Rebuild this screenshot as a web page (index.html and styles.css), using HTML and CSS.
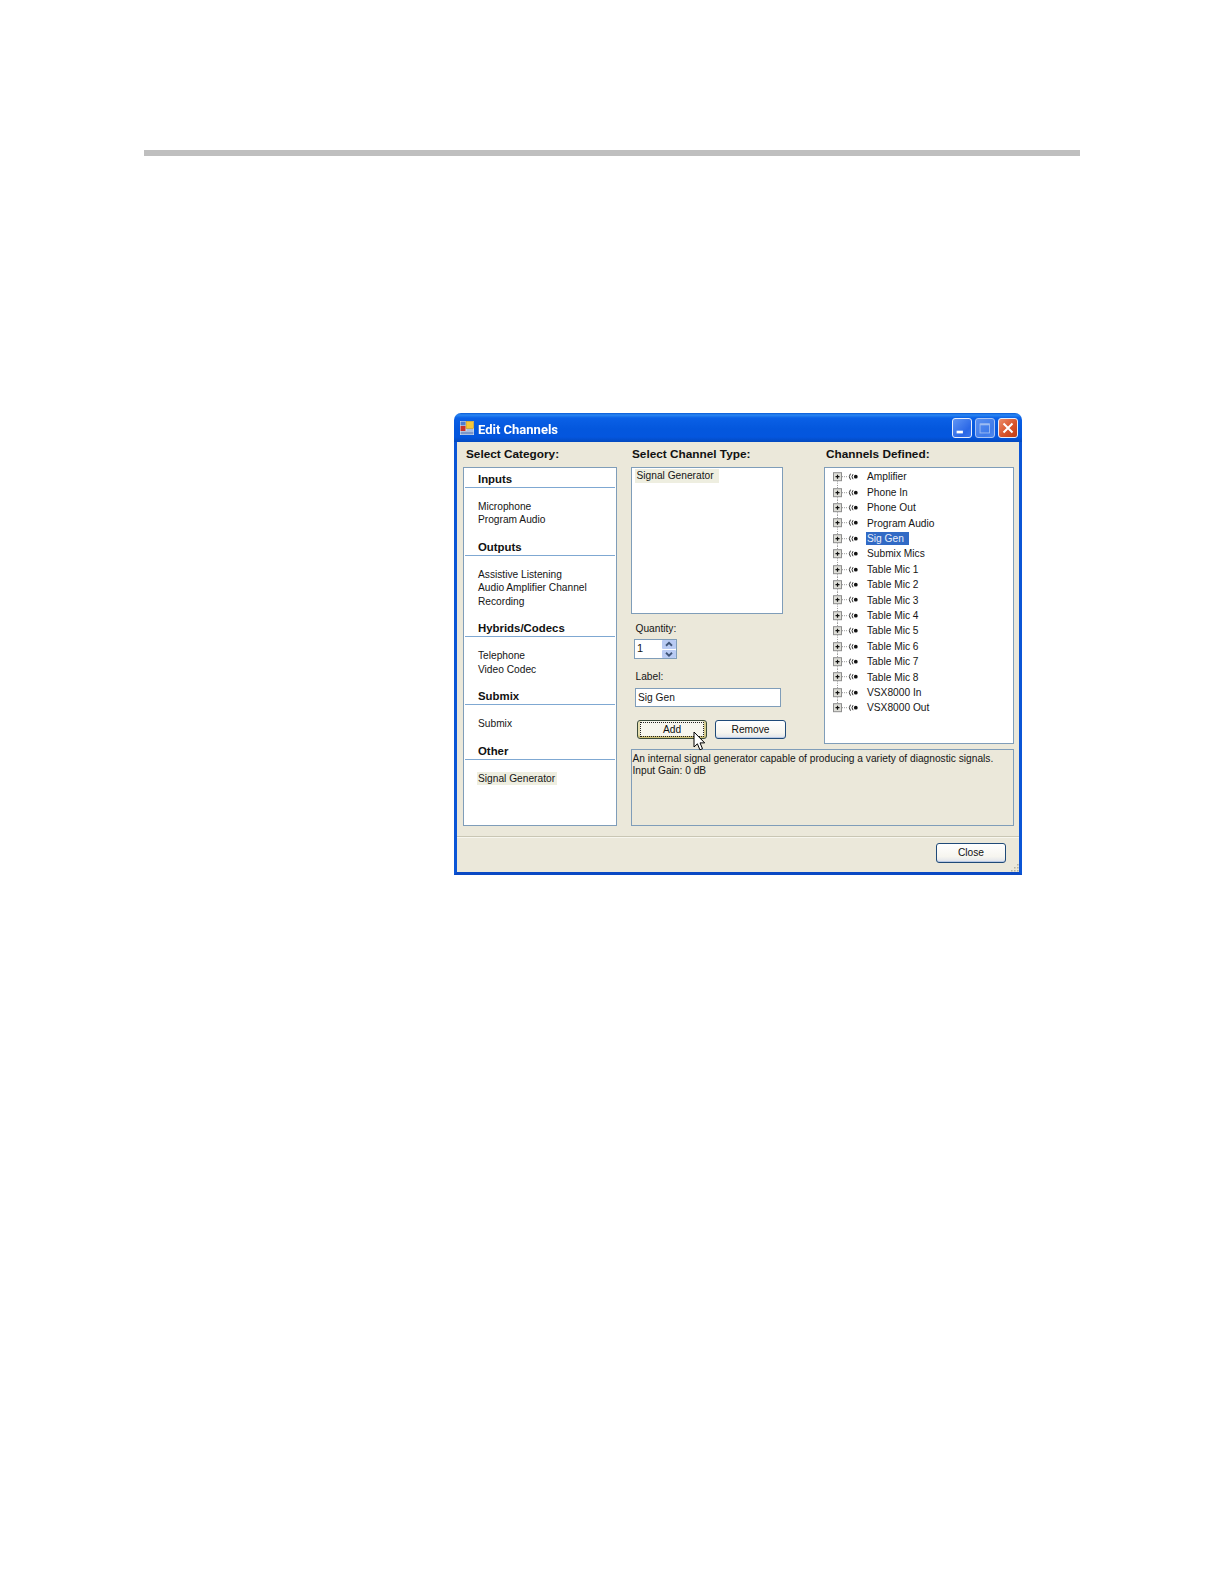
FILE: index.html
```html
<!DOCTYPE html>
<html lang="en">
<head>
<meta charset="utf-8">
<title>Edit Channels</title>
<link rel="stylesheet" href="styles.css">
</head>
<body>
<svg class="defs" width="0" height="0" aria-hidden="true">
  <symbol id="node-base" viewBox="0 0 40 15.4">
    <path d="M17 7.7h5" stroke="#9a9a9a" stroke-width="1" stroke-dasharray="1 1" fill="none"/>
    <rect x="8.5" y="3.7" width="8" height="8" fill="#dedeD8" stroke="#8d8d8d"/>
    <path d="M10.5 7.7h4M12.5 5.7v4" stroke="#111" stroke-width="1.2" fill="none"/>
    <path d="M25.5 4.7q-2.4 3 0 6M28 5.2q-2 2.5 0 5" stroke="#333" stroke-width="1" fill="none"/>
    <circle cx="30.8" cy="7.7" r="1.9" fill="#111"/>
  </symbol>
  <symbol id="node-up" viewBox="0 0 40 15.4">
    <path d="M12.5 0v3.7" stroke="#9a9a9a" stroke-dasharray="1 1" fill="none"/>
  </symbol>
  <symbol id="node-down" viewBox="0 0 40 15.4">
    <path d="M12.5 11.7v3.7" stroke="#9a9a9a" stroke-dasharray="1 1" fill="none"/>
  </symbol>
</svg>

<div class="rule"></div>

<div class="window">
  <div class="titlebar">
    <svg class="app-icon" viewBox="0 0 14 14" width="14" height="14">
      <rect x="0" y="0" width="14" height="14" fill="#dfe6f2"/>
      <rect x="6" y="0.5" width="7.5" height="7" fill="#f4c73a" stroke="#b98f1a" stroke-width=".6"/>
      <rect x="0.5" y="5" width="5" height="5" fill="#c9322a"/>
      <rect x="0.5" y="0.5" width="5" height="4" fill="#4d7bd0"/>
      <rect x="0.5" y="10.5" width="13" height="3" fill="#7d97c9"/>
      <rect x="6.5" y="8" width="7" height="2.5" fill="#a9bde0"/>
    </svg>
    <span class="title-text">Edit Channels</span>
    <div class="caption-buttons">
      <div class="cap cap-min"><svg viewBox="0 0 20 20"><rect x="4" y="13" width="7" height="3" fill="#fff"/></svg></div>
      <div class="cap cap-max"><svg viewBox="0 0 20 20"><rect x="4.5" y="5.5" width="10.5" height="10" fill="none" stroke="#9dbcf2" stroke-width="1"/><rect x="4.5" y="5" width="10.5" height="2" fill="#9dbcf2"/></svg></div>
      <div class="cap cap-close"><svg viewBox="0 0 20 20"><path d="M5 5l10 10M15 5L5 15" stroke="#fff" stroke-width="2.2" fill="none"/></svg></div>
    </div>
  </div>

  <div class="client">
    <div class="panes">
      <div class="col-category">
        <div class="heading">Select Category:</div>
        <div class="box category-list">
          <section class="cat">
            <h3 class="cat-title">Inputs</h3>
            <ul class="cat-items"><li>Microphone</li><li>Program Audio</li></ul>
          </section>
          <section class="cat">
            <h3 class="cat-title">Outputs</h3>
            <ul class="cat-items"><li>Assistive Listening</li><li>Audio Amplifier Channel</li><li>Recording</li></ul>
          </section>
          <section class="cat">
            <h3 class="cat-title">Hybrids/Codecs</h3>
            <ul class="cat-items"><li>Telephone</li><li>Video Codec</li></ul>
          </section>
          <section class="cat">
            <h3 class="cat-title">Submix</h3>
            <ul class="cat-items"><li>Submix</li></ul>
          </section>
          <section class="cat">
            <h3 class="cat-title">Other</h3>
            <ul class="cat-items"><li><span class="picked">Signal Generator</span></li></ul>
          </section>
        </div>
      </div>

      <div class="col-right">
        <div class="upper">
          <div class="col-type">
            <div class="heading">Select Channel Type:</div>
            <div class="box type-list"><div class="type-item">Signal Generator</div></div>
            <div class="field-label quantity-label">Quantity:</div>
            <div class="spinner">
              <span class="spinner-value">1</span>
              <div class="spin-buttons">
                <div class="spin"><svg viewBox="0 0 14 8"><path d="M4 5.5l3-3 3 3" fill="none" stroke="#3f5478" stroke-width="1.8"/></svg></div>
                <div class="spin"><svg viewBox="0 0 14 8"><path d="M4 2.5l3 3 3-3" fill="none" stroke="#3f5478" stroke-width="1.8"/></svg></div>
              </div>
            </div>
            <div class="field-label name-label">Label:</div>
            <div class="textbox">Sig Gen</div>
            <div class="button-row">
              <div class="btn btn-add"><span class="focus-ring">Add</span></div>
              <div class="btn btn-remove">Remove</div>
              <svg class="cursor" viewBox="0 0 12 20" width="12" height="20"><path d="M1 1v15l3.4-3.2 2.5 6 2.6-1.1-2.5-5.8h4.7z" fill="#fff" stroke="#000" stroke-width="1"/></svg>
            </div>
          </div>
          <div class="col-tree">
            <div class="heading">Channels Defined:</div>
            <div class="box tree">
              <div class="tree-row"><svg class="node"><use href="#node-down"/><use href="#node-base"/></svg><span>Amplifier</span></div>
              <div class="tree-row"><svg class="node"><use href="#node-up"/><use href="#node-down"/><use href="#node-base"/></svg><span>Phone In</span></div>
              <div class="tree-row"><svg class="node"><use href="#node-up"/><use href="#node-down"/><use href="#node-base"/></svg><span>Phone Out</span></div>
              <div class="tree-row"><svg class="node"><use href="#node-up"/><use href="#node-down"/><use href="#node-base"/></svg><span>Program Audio</span></div>
              <div class="tree-row"><svg class="node"><use href="#node-up"/><use href="#node-down"/><use href="#node-base"/></svg><span class="selected">Sig Gen</span></div>
              <div class="tree-row"><svg class="node"><use href="#node-up"/><use href="#node-down"/><use href="#node-base"/></svg><span>Submix Mics</span></div>
              <div class="tree-row"><svg class="node"><use href="#node-up"/><use href="#node-down"/><use href="#node-base"/></svg><span>Table Mic 1</span></div>
              <div class="tree-row"><svg class="node"><use href="#node-up"/><use href="#node-down"/><use href="#node-base"/></svg><span>Table Mic 2</span></div>
              <div class="tree-row"><svg class="node"><use href="#node-up"/><use href="#node-down"/><use href="#node-base"/></svg><span>Table Mic 3</span></div>
              <div class="tree-row"><svg class="node"><use href="#node-up"/><use href="#node-down"/><use href="#node-base"/></svg><span>Table Mic 4</span></div>
              <div class="tree-row"><svg class="node"><use href="#node-up"/><use href="#node-down"/><use href="#node-base"/></svg><span>Table Mic 5</span></div>
              <div class="tree-row"><svg class="node"><use href="#node-up"/><use href="#node-down"/><use href="#node-base"/></svg><span>Table Mic 6</span></div>
              <div class="tree-row"><svg class="node"><use href="#node-up"/><use href="#node-down"/><use href="#node-base"/></svg><span>Table Mic 7</span></div>
              <div class="tree-row"><svg class="node"><use href="#node-up"/><use href="#node-down"/><use href="#node-base"/></svg><span>Table Mic 8</span></div>
              <div class="tree-row"><svg class="node"><use href="#node-up"/><use href="#node-down"/><use href="#node-base"/></svg><span>VSX8000 In</span></div>
              <div class="tree-row"><svg class="node"><use href="#node-up"/><use href="#node-base"/></svg><span>VSX8000 Out</span></div>
            </div>
          </div>
        </div>
        <div class="description">An internal signal generator capable of producing a variety of diagnostic signals.<br>Input Gain: 0 dB</div>
      </div>
    </div>

    <div class="footer">
      <div class="btn btn-close">Close</div>
      <svg class="grip" viewBox="0 0 9 9" width="9" height="9"><path d="M7 1h1.6v1.6H7zM4 4h1.6v1.6H4zM7 4h1.6v1.6H7zM1 7h1.6v1.6H1zM4 7h1.6v1.6H4zM7 7h1.6v1.6H7z" fill="#b5b2a0"/></svg>
    </div>
  </div>
</div>
</body>
</html>
```

FILE: styles.css
```css
* { box-sizing: border-box; }

html, body { margin: 0; padding: 0; background: #fff; }

body {
  font-family: "Liberation Sans", Arial, sans-serif;
  font-size: 10.2px;
  color: #151515;
  height: 1584px;
  overflow: hidden;
}

.defs { position: absolute; }

.rule {
  width: 936px;
  height: 6px;
  margin: 150px 0 0 144px;
  background: #bfbfbf;
}

.window {
  width: 568px;
  height: 462px;
  margin: 257px 0 0 454px;
  border-radius: 7px 7px 0 0;
  overflow: hidden;
  display: flex;
  flex-direction: column;
  filter: blur(.3px);
}

.titlebar {
  height: 29px;
  flex: none;
  display: flex;
  align-items: center;
  padding: 3px 4px 0 6px;
  background: linear-gradient(#0a5ad6 0, #2a86f2 2px, #0a60e6 5px, #0457dd 16px, #0456de 24px, #0349bf 29px);
}

.app-icon { flex: none; margin-top: -2px; }

.title-text {
  margin-left: 4px;
  color: #fff;
  font-family: Roboto, "Liberation Sans", sans-serif;
  font-weight: 700;
  font-size: 13px;
}

.caption-buttons {
  margin-left: auto;
  margin-top: -2px;
  display: flex;
  gap: 3px;
}

.cap {
  width: 20px;
  height: 20px;
  border: 1px solid #e8eefc;
  border-radius: 3px;
  overflow: hidden;
}

.cap svg { display: block; width: 100%; height: 100%; }

.cap-min { background: linear-gradient(135deg, #5f95f5, #2a67e6 70%, #3d78ee); }
.cap-max { background: linear-gradient(135deg, #5a8ff0, #3f7bea 70%, #4f88ee); border-color: #a9c4f4; }
.cap-close { background: linear-gradient(135deg, #eb8c6a, #d9542b 55%, #c23c14); }

.client {
  flex: 1;
  display: flex;
  flex-direction: column;
  background: #ebe8da;
  border-left: 3px solid #0b55d6;
  border-right: 3px solid #0b55d6;
  border-bottom: 3px solid #0a49c4;
}

.panes {
  display: grid;
  grid-template-columns: 154px 383.5px;
  column-gap: 13.5px;
  padding-left: 6px;
}

.heading {
  height: 25px;
  line-height: 24px;
  font-size: 11.8px;
  font-weight: 700;
  color: #111;
  padding-left: 3px;
  white-space: nowrap;
}

.col-type .heading { padding-left: 1.5px; }
.col-tree .heading { padding-left: 2px; }

.box {
  background: #fff;
  border: 1px solid #7f9db9;
}

.category-list {
  height: 359px;
  padding-top: 1px;
}

.cat-title {
  margin: 0 1px;
  height: 19px;
  line-height: 20px;
  padding-left: 13px;
  font-size: 11.4px;
  font-weight: 700;
  color: #111;
  border-bottom: 1px solid #7fa8d2;
}

.cat-items {
  list-style: none;
  margin: 11.9px 0 10.3px;
  padding: 0 0 0 14px;
  line-height: 13.4px;
}

.cat-items li { height: 13.4px; white-space: nowrap; }

.picked {
  display: inline-block;
  margin-left: -1px;
  padding: 0 1.5px 0 1px;
  background: #eeeee0;
}

.col-right {
  display: flex;
  flex-direction: column;
}

.upper {
  display: grid;
  grid-template-columns: 193.5px 190px;
  height: 302px;
}

.type-list {
  width: 152px;
  height: 147px;
  padding: 1px 0 0 3px;
}

.type-item {
  width: 84px;
  height: 14px;
  line-height: 14px;
  padding-left: 2px;
  background: #eeeee0;
  white-space: nowrap;
  overflow: hidden;
}

.field-label {
  height: 13px;
  line-height: 13px;
  margin-left: 5px;
}

.quantity-label { margin-top: 7.5px; }

.spinner {
  width: 43px;
  height: 20px;
  margin: 4.5px 0 0 3.5px;
  padding: 1px 0 1px 2px;
  display: flex;
  align-items: center;
  justify-content: space-between;
  background: #fff;
  border: 1px solid #7f9db9;
  font-size: 11px;
}

.spinner-value { margin-top: -2px; }

.spin-buttons {
  width: 14px;
  height: 18px;
  display: flex;
  flex-direction: column;
  gap: 1px;
}

.spin {
  flex: 1;
  background: #b9cbf3;
  border-radius: 1px;
}

.spin svg { display: block; width: 100%; height: 100%; }

.name-label { margin-top: 11px; }

.textbox {
  width: 146px;
  height: 19px;
  line-height: 17px;
  margin: 4.5px 0 0 4.5px;
  padding-left: 2px;
  background: #fff;
  border: 1px solid #7f9db9;
}

.button-row {
  position: relative;
  display: flex;
  gap: 8px;
  margin: 13.5px 0 0 6.5px;
}

.btn {
  height: 19px;
  line-height: 17px;
  text-align: center;
  color: #111;
  border: 1px solid #1f4a78;
  border-radius: 3px;
  background: linear-gradient(#fff, #f6f5ef 70%, #dfe3ea);
  box-shadow: inset 0 -1px 0 #b9c9e4;
}

.btn-add {
  width: 70px;
  padding: 1px;
  line-height: 15px;
  background: #f7f6ee;
  border-color: #3a4a3a;
  box-shadow: inset 0 -2px 0 #cfc27a, inset 2px 0 0 #e6dfb0, inset -2px 0 0 #d8cf90;
}

.focus-ring {
  display: block;
  height: 15px;
  outline: 1px dotted #222;
  outline-offset: -1px;
  margin: 0 1px;
}

.btn-remove { width: 71px; }

.cursor {
  position: absolute;
  left: 56px;
  top: 11px;
}

.tree {
  height: 277px;
  padding-top: 1.3px;
}

.tree-row {
  height: 15.4px;
  display: flex;
  align-items: center;
  white-space: nowrap;
}

.node {
  flex: none;
  margin-left: -1px;
  width: 42px;
  height: 15.4px;
}

.node use { width: 40px; height: 15.4px; }

.tree-row span {
  display: inline-block;
  line-height: 13px;
  padding: 0 5px 0 1px;
}

.tree-row .selected {
  background: #316ac5;
  color: #e8eefa;
}

.description {
  height: 77px;
  margin-top: 5px;
  padding: 3px 0 0 1px;
  line-height: 12px;
  border: 1px solid #7f9db9;
  white-space: nowrap;
}

.footer {
  position: relative;
  flex: 1;
  margin-top: 10px;
  padding: 6px 13px 0 0;
  display: flex;
  justify-content: flex-end;
  border-top: 1px solid #c9c6b4;
  box-shadow: inset 0 1px 0 #f7f6ee;
}

.btn-close {
  width: 70px;
  height: 20px;
  line-height: 18px;
}

.grip {
  position: absolute;
  right: 0;
  bottom: 0;
}
```
